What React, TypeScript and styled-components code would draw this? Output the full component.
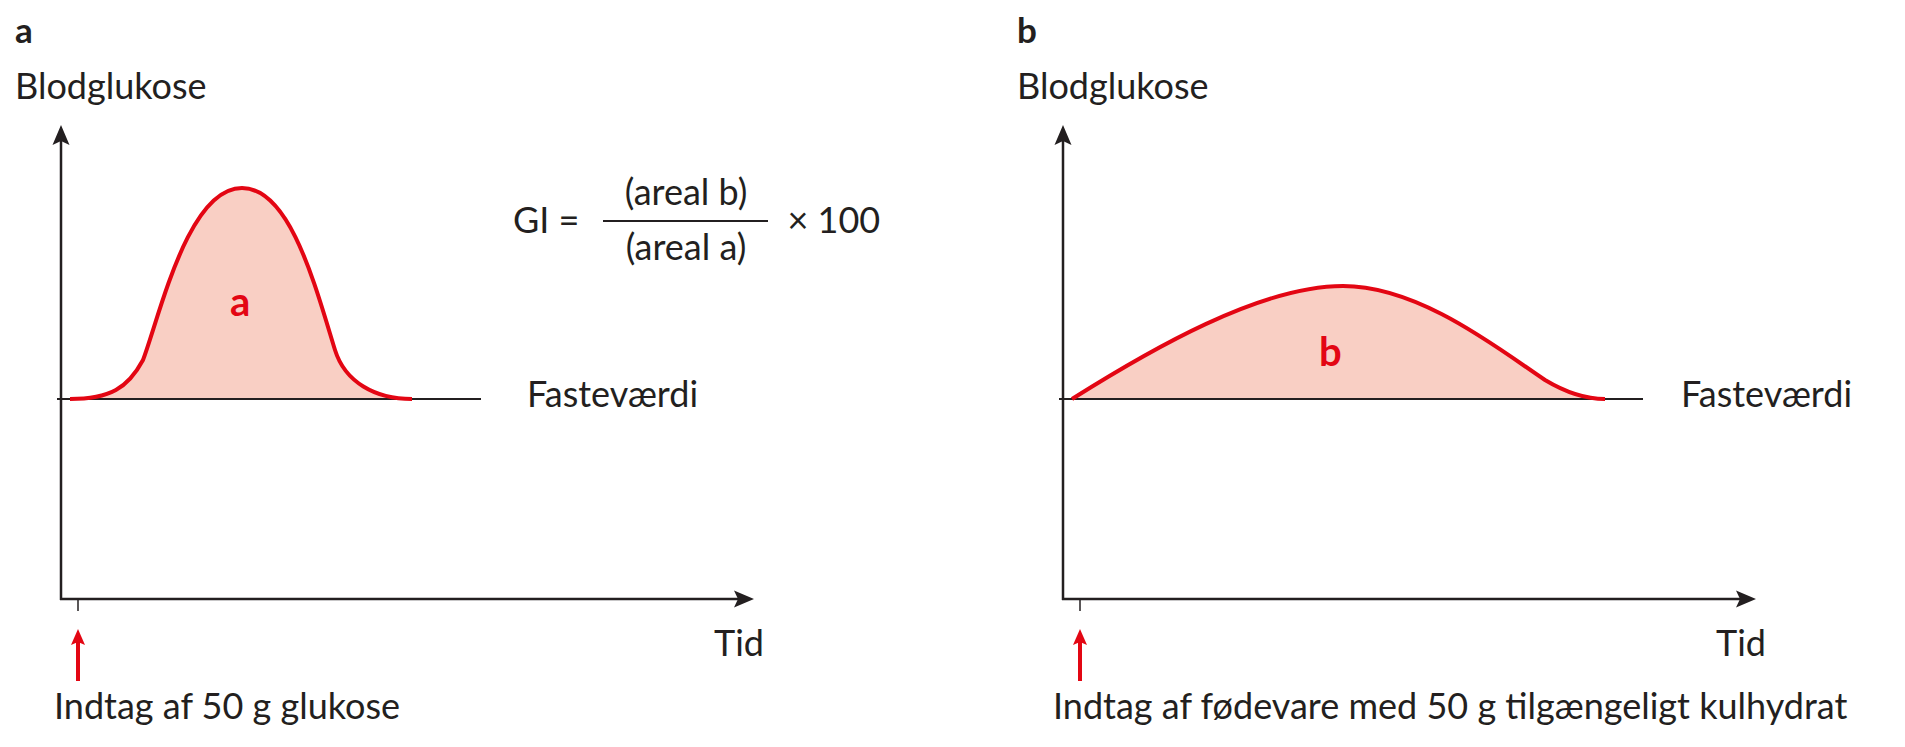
import React from "react";
import styled, { createGlobalStyle } from "styled-components";

const INK = "#231f20";
const RED = "#e30613";
const FILL = "#f9cfc4";

const GlobalStyle = createGlobalStyle`
  html, body {
    margin: 0;
    padding: 0;
    background: #ffffff;
  }
  body {
    font-family: Lato, "Open Sans", "Liberation Sans", sans-serif;
    color: ${INK};
  }
`;

const Page = styled.div`
  display: flex;
  width: 1905px;
  height: 747px;
  padding-top: 9px;
  box-sizing: border-box;
  overflow: hidden;
`;

const Panel = styled.section<{ $width?: number }>`
  display: flex;
  flex-direction: column;
  width: ${({ $width }) => ($width ? `${$width}px` : "auto")};
  flex: ${({ $width }) => ($width ? "none" : 1)};
`;

const PanelLetter = styled.div`
  margin-left: 15px;
  height: 40px;
  font-size: 35px;
  font-weight: 700;
  line-height: 40px;
`;

const AxisTitle = styled.div`
  margin: 16px 0 0 15px;
  font-size: 36px;
  line-height: 40px;
`;

const ChartArea = styled.div`
  position: relative;
  height: 575px;
  margin-top: 5px;
`;

const Plot = styled.svg`
  display: block;
`;

const Label = styled.span<{ $x: number; $y: number }>`
  position: absolute;
  left: ${({ $x }) => $x}px;
  top: ${({ $y }) => $y}px;
  font-size: 36px;
  line-height: 40px;
  white-space: nowrap;
`;

const AreaLetter = styled(Label)`
  color: ${RED};
  font-size: 40px;
  font-weight: 700;
`;

const Formula = styled.div<{ $x: number; $y: number }>`
  position: absolute;
  left: ${({ $x }) => $x}px;
  top: ${({ $y }) => $y}px;
  display: flex;
  align-items: center;
  font-size: 36px;
  line-height: 36px;
  white-space: nowrap;
`;

const FormulaLead = styled.span`
  margin-right: 24px;
`;

const Fraction = styled.div`
  display: flex;
  flex-direction: column;
  align-items: center;
  width: 165px;
`;

const Numerator = styled.span`
  padding-bottom: 11px;
`;

const Denominator = styled.span`
  width: 100%;
  padding-top: 6px;
  border-top: 2px solid ${INK};
  text-align: center;
`;

const FormulaTail = styled.span`
  margin-left: 19px;
`;

const Caption = styled.div<{ $indent: number }>`
  margin-left: ${({ $indent }) => $indent}px;
  font-size: 36px;
  line-height: 40px;
  white-space: nowrap;
`;

interface PanelData {
  letter: string;
  width?: number;
  curve: string;
  baselineEnd: number;
  area: { x: number; y: number };
  fasting: number;
  caption: string;
  captionIndent: number;
}

const panels: PanelData[] = [
  {
    letter: "a",
    width: 1002,
    curve:
      "M70,289 C110,289 128,278 143,250 C160,205 188,78 242,78 C290,78 315,175 335,240 C345,272 375,289 412,289 Z",
    baselineEnd: 481,
    area: { x: 230, y: 171 },
    fasting: 527,
    caption: "Indtag af 50 g glukose",
    captionIndent: 54,
  },
  {
    letter: "b",
    curve:
      "M70,289 C148,240 258,176 341,176 C418,176 498,240 543,270 C568,285 588,289 603,289 Z",
    baselineEnd: 641,
    area: { x: 317, y: 221 },
    fasting: 679,
    caption: "Indtag af fødevare med 50 g tilgængeligt kulhydrat",
    captionIndent: 51,
  },
];

const Axes: React.FC<{ curve: string; baselineEnd: number }> = ({
  curve,
  baselineEnd,
}) => (
  <Plot width="800" height="575" viewBox="0 0 800 575">
    <path d={curve} fill={FILL} stroke="none" />
    <line x1="57" y1="289" x2={baselineEnd} y2="289" stroke={INK} strokeWidth="2" />
    <path d={curve.replace(" Z", "")} fill="none" stroke={RED} strokeWidth="4" />
    {/* y axis */}
    <line x1="61" y1="30" x2="61" y2="490" stroke={INK} strokeWidth="2.5" />
    <path d="M61,15 L69.5,35 L61,31 L52.5,35 Z" fill={INK} />
    {/* x axis */}
    <line x1="60" y1="489" x2="740" y2="489" stroke={INK} strokeWidth="2.5" />
    <path d="M754,489 L734,480.5 L738,489 L734,497.5 Z" fill={INK} />
    <line x1="78" y1="490" x2="78" y2="501" stroke={INK} strokeWidth="1.5" />
    {/* intake arrow */}
    <line x1="78" y1="531" x2="78" y2="571" stroke={RED} strokeWidth="4" />
    <path d="M78,519 L85,535 L78,532 L71,535 Z" fill={RED} />
  </Plot>
);

export default function App() {
  return (
    <>
      <GlobalStyle />
      <Page>
        {panels.map((p) => (
          <Panel key={p.letter} $width={p.width}>
            <PanelLetter>{p.letter}</PanelLetter>
            <AxisTitle>Blodglukose</AxisTitle>
            <ChartArea>
              <Axes curve={p.curve} baselineEnd={p.baselineEnd} />
              <AreaLetter $x={p.area.x} $y={p.area.y}>
                {p.letter}
              </AreaLetter>
              <Label $x={p.fasting} $y={263}>
                Fasteværdi
              </Label>
              <Label $x={714} $y={512}>
                Tid
              </Label>
              {p.letter === "a" && (
                <Formula $x={513} $y={63}>
                  <FormulaLead>GI =</FormulaLead>
                  <Fraction>
                    <Numerator>(areal b)</Numerator>
                    <Denominator>(areal a)</Denominator>
                  </Fraction>
                  <FormulaTail>× 100</FormulaTail>
                </Formula>
              )}
            </ChartArea>
            <Caption $indent={p.captionIndent}>{p.caption}</Caption>
          </Panel>
        ))}
      </Page>
    </>
  );
}
